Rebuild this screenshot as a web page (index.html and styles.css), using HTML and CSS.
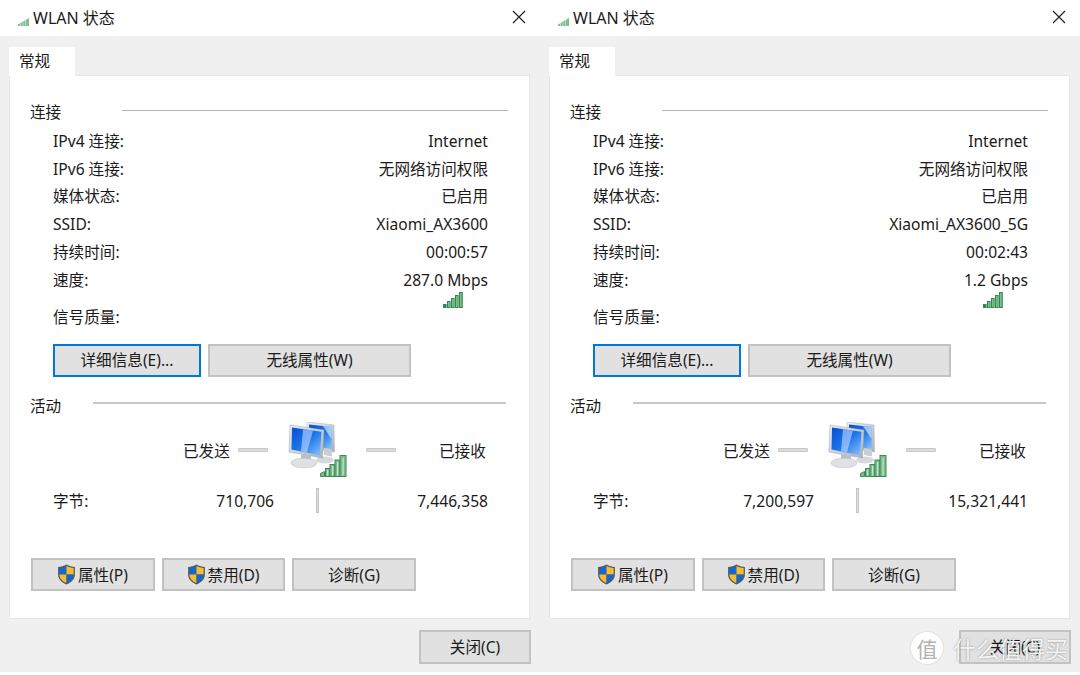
FILE: index.html
```html
<!DOCTYPE html>
<html lang="zh-CN">
<head>
<meta charset="utf-8">
<title>WLAN 状态</title>
<link rel="stylesheet" href="styles.css">
</head>
<body>
<svg class="defs" width="0" height="0" aria-hidden="true">
  <defs>
    <linearGradient id="scr" x1="0" y1="0" x2="1" y2="1"><stop offset="0" stop-color="#0a4fd0"/><stop offset=".5" stop-color="#1c74ec"/><stop offset="1" stop-color="#8cc4f8"/></linearGradient>
    <linearGradient id="frm" x1="0" y1="0" x2="1" y2="1"><stop offset="0" stop-color="#eef2f6"/><stop offset="1" stop-color="#aab2ba"/></linearGradient>
    <symbol id="bars" viewBox="0 0 27 22">
      <g fill="#7dbb8e" stroke="#3f8a58" stroke-width="1">
        <path d="M.5 21.500v-3l4-2v5z"/><rect x="5.500" y="13.500" width="4.500" height="8"/><rect x="10" y="9.500" width="5" height="12"/><rect x="15" y="5" width="5" height="16.500"/><rect x="20" y=".5" width="6" height="21"/>
      </g>
      <g fill="#c4e5cc"><rect x="7" y="15" width="1.200" height="5.500"/><rect x="12" y="11" width="1.200" height="9.500"/><rect x="17" y="7" width="1.200" height="13.500"/><rect x="22.500" y="3" width="1.200" height="17.500"/></g>
    </symbol>
    <symbol id="smallbars" viewBox="0 0 20 16">
      <g fill="#2f8a4c"><rect x="0" y="12" width="3.600" height="4"/><rect x="4" y="9" width="3.600" height="7"/><rect x="8" y="6" width="3.600" height="10"/><rect x="12" y="3" width="3.600" height="13"/><rect x="16" y="0" width="3.800" height="16"/></g>
      <g fill="#b9dfc4"><rect x="5.400" y="10" width="1" height="5"/><rect x="9.400" y="7" width="1" height="8"/><rect x="13.400" y="4" width="1" height="11"/><rect x="17.400" y="1" width="1" height="14"/></g>
    </symbol>
    <symbol id="tinybars" viewBox="0 0 11 8">
      <path d="M0 8V6.500L11 0v8z" fill="#7fbf8f"/>
      <path d="M2.500 8V5M5 8V3.500M7.500 8V2" stroke="#e4f3e8" stroke-width=".6"/>
    </symbol>
    <symbol id="shield" viewBox="0 0 20 20">
      <path d="M10 .5C7.500 2 4.500 2.800 2 2.800v7.200c0 4.500 3.500 7.800 8 9.500 4.500-1.700 8-5 8-9.500V2.800C15.500 2.800 12.500 2 10 .5z" fill="#555a5e"/>
      <path d="M10 2v8H3.200V3.800C5.800 3.700 8 3 10 2z" fill="#1668c8"/>
      <path d="M10 2c2 1 4.200 1.700 6.800 1.800V10H10z" fill="#f7bb36"/>
      <path d="M3.200 10H10v8.200C6.300 16.600 3.400 14 3.200 10z" fill="#f7bb36"/>
      <path d="M10 10h6.800c-.2 4-3.100 6.600-6.800 8.200z" fill="#1668c8"/>
    </symbol>
    <symbol id="net" viewBox="0 0 60 56">
      <path d="M20 0l27 3 .5 27L20 25z" fill="url(#frm)" stroke="#a6adb4" stroke-width=".5"/>
      <path d="M22 2.500l23 2.500-.5 22-22.500-3.500z" fill="url(#scr)"/>
      <path d="M36 4l9 1-.5 12z" fill="#d6eaff" opacity=".7"/>
      <path d="M37 26l8 1.500 0 7-8-1.500z" fill="#c9ced3"/>
      <ellipse cx="38" cy="38" rx="9" ry="3.500" fill="#d6d9dc"/>
      <path d="M3 3l34 5-1.500 28L2 30z" fill="url(#frm)" stroke="#9aa3ab" stroke-width=".5"/>
      <path d="M5 5.500l29.500 4.300-1.500 23.500L4.500 27.500z" fill="url(#scr)"/>
      <path d="M16 7.200l10 1.500-6 21.500-6-1z" fill="#cfe6ff" opacity=".55"/>
      <path d="M14 32l10 2 0 6-10-2z" fill="#b9bfc4"/>
      <ellipse cx="17" cy="41" rx="13" ry="4.800" fill="#dfe2e4" stroke="#b4b9bd" stroke-width=".5"/>
    </symbol>
  </defs>
</svg>
<main class="desktop">
  <section class="window">
    <header class="titlebar">
      <svg class="title-icon"><use href="#tinybars"/></svg>
      <span class="title-text">WLAN 状态</span>
      <svg class="close-x" viewBox="0 0 14 14"><path d="M1 1l12 12M13 1L1 13"/></svg>
    </header>
    <div class="client">
      <div class="tab">常规</div>
      <div class="panel">
        <div class="group-head conn"><span>连接</span><i class="rule"></i></div>
        <div class="rows">
          <div class="row"><span>IPv4 连接:</span><span>Internet</span></div>
          <div class="row"><span>IPv6 连接:</span><span>无网络访问权限</span></div>
          <div class="row"><span>媒体状态:</span><span>已启用</span></div>
          <div class="row"><span>SSID:</span><span>Xiaomi_AX3600</span></div>
          <div class="row"><span>持续时间:</span><span>00:00:57</span></div>
          <div class="row"><span>速度:</span><span>287.0 Mbps</span></div>
          <div class="row signal"><span>信号质量:</span><svg class="signal-icon"><use href="#smallbars"/></svg></div>
        </div>
        <div class="btns detail">
          <button class="btn focus w148">详细信息(E)...</button>
          <button class="btn w203">无线属性(W)</button>
        </div>
        <div class="group-head act"><span>活动</span><i class="rule"></i></div>
        <div class="traffic">
          <span class="sent">已发送</span><i class="dash"></i>
          <svg class="net-icon"><use href="#net"/></svg>
          <i class="dash"></i><span class="recv">已接收</span>
          <svg class="net-bars"><use href="#bars"/></svg>
        </div>
        <div class="bytes">
          <span>字节:</span><span class="num">710,706</span><i class="vbar"></i><span class="num">7,446,358</span>
        </div>
        <div class="btns bottom">
          <button class="btn w124"><svg class="shield"><use href="#shield"/></svg>属性(P)</button>
          <button class="btn w123"><svg class="shield"><use href="#shield"/></svg>禁用(D)</button>
          <button class="btn w124">诊断(G)</button>
        </div>
      </div>
      <div class="footer"><button class="btn close">关闭(C)</button></div>
    </div>
  </section>
  <section class="window">
    <header class="titlebar">
      <svg class="title-icon"><use href="#tinybars"/></svg>
      <span class="title-text">WLAN 状态</span>
      <svg class="close-x" viewBox="0 0 14 14"><path d="M1 1l12 12M13 1L1 13"/></svg>
    </header>
    <div class="client">
      <div class="tab">常规</div>
      <div class="panel">
        <div class="group-head conn"><span>连接</span><i class="rule"></i></div>
        <div class="rows">
          <div class="row"><span>IPv4 连接:</span><span>Internet</span></div>
          <div class="row"><span>IPv6 连接:</span><span>无网络访问权限</span></div>
          <div class="row"><span>媒体状态:</span><span>已启用</span></div>
          <div class="row"><span>SSID:</span><span>Xiaomi_AX3600_5G</span></div>
          <div class="row"><span>持续时间:</span><span>00:02:43</span></div>
          <div class="row"><span>速度:</span><span>1.2 Gbps</span></div>
          <div class="row signal"><span>信号质量:</span><svg class="signal-icon"><use href="#smallbars"/></svg></div>
        </div>
        <div class="btns detail">
          <button class="btn focus w148">详细信息(E)...</button>
          <button class="btn w203">无线属性(W)</button>
        </div>
        <div class="group-head act"><span>活动</span><i class="rule"></i></div>
        <div class="traffic">
          <span class="sent">已发送</span><i class="dash"></i>
          <svg class="net-icon"><use href="#net"/></svg>
          <i class="dash"></i><span class="recv">已接收</span>
          <svg class="net-bars"><use href="#bars"/></svg>
        </div>
        <div class="bytes">
          <span>字节:</span><span class="num">7,200,597</span><i class="vbar"></i><span class="num">15,321,441</span>
        </div>
        <div class="btns bottom">
          <button class="btn w124"><svg class="shield"><use href="#shield"/></svg>属性(P)</button>
          <button class="btn w123"><svg class="shield"><use href="#shield"/></svg>禁用(D)</button>
          <button class="btn w124">诊断(G)</button>
        </div>
      </div>
      <div class="footer"><button class="btn close">关闭(C)</button></div>
    </div>
  </section>
  <div class="watermark"><span class="wm-badge">值</span><span class="wm-text">什么值得买</span></div>
</main>
</body>
</html>
```

FILE: styles.css
```css
* { box-sizing: border-box; }
html, body { margin: 0; padding: 0; }
body {
  width: 1080px;
  height: 675px;
  overflow: hidden;
  background: #fff;
  color: #1a1a1a;
  font-family: "Noto Sans", "Noto Sans CJK SC", sans-serif;
  font-size: 15.600px;
  line-height: 22px;
}
.defs { position: absolute; }
.desktop { position: relative; display: flex; width: 1080px; height: 675px; }
.window { width: 540px; height: 675px; display: flex; flex-direction: column; }

.titlebar {
  height: 36px;
  flex: none;
  background: #fff;
  display: flex;
  align-items: center;
  padding: 0 14px 0 18px;
}
.title-icon { width: 11px; height: 8px; margin-top: 8px; flex: none; }
.title-text { margin-left: 4px; font-size: 16px; flex: 1; color: #1a1a1a; }
.close-x { width: 14px; height: 14px; fill: none; stroke: #222; stroke-width: 1.200; margin-top: -2px; }

.client {
  flex: 1;
  background: #f0f0f0;
  padding: 11px 0 0 9px;
  margin-bottom: 3px;
}
.tab {
  width: 66px;
  height: 29px;
  background: #fff;
  padding: 3px 0 0 10px;
  margin-bottom: -1px;
  position: relative;
}
.panel {
  width: 521px;
  height: 544px;
  background: #fff;
  border: 1px solid #e6e6e6;
  padding-top: 25px;
}
.group-head { display: flex; align-items: center; height: 22px; padding-left: 20px; }
.rule { display: block; height: 1px; background: #b4b4b4; }
.conn .rule { margin: -3px 0 0 61px; width: 386px; }
.act { margin-top: 18px; }
.act .rule { margin: -5px 0 0 32px; width: 413px; background: #c8c8c8; height: 2px; }

.rows { margin: 4px 41px 0 43px; }
.row { display: flex; justify-content: space-between; align-items: center; height: 27.800px; }
.row.signal { height: 34px; align-items: flex-end; }
.signal-icon { width: 20px; height: 16px; margin: 0 25px 20px 0; }

.btns { display: flex; gap: 7px; }
.detail { margin: 16px 0 0 43px; }
.bottom { margin: 43px 0 0 21px; }
.btn {
  height: 33px;
  background: #e1e1e1;
  border: 2px solid #c2c2c2;
  font: inherit;
  color: #1a1a1a;
  padding: 0;
  display: flex;
  align-items: center;
  justify-content: center;
}
.bottom .btn { padding-top: 2px; }
.focus { border-color: #0078d7; }
.w148 { width: 148px; }
.w203 { width: 203px; }
.w124 { width: 124px; }
.w123 { width: 123px; }
.shield { width: 21px; height: 21px; flex: none; margin: -2px 1px 0 -2px; }
.close { width: 112px; height: 34px; }

.footer { display: flex; justify-content: flex-end; padding-top: 11px; width: 531px; margin-left: -9px; }

.traffic {
  position: relative;
  display: grid;
  grid-template-columns: 46px 9px 30px 19px 59px 20px 30px 43px 46px;
  align-items: center;
  margin: 5px 0 0 173px;
  width: 306px;
  height: 57px;
}
.sent { grid-column: 1; margin-top: 2px; white-space: nowrap; }
.traffic .dash:nth-of-type(1) { grid-column: 3; }
.net-icon { grid-column: 5; width: 60px; height: 56px; }
.traffic .dash:nth-of-type(2) { grid-column: 7; }
.recv { grid-column: 9; margin-top: 2px; white-space: nowrap; }
.dash { display: block; height: 4px; background: #dcdcdc; border: 1px solid #c8c8c8; border-radius: 1px; }
.net-bars { position: absolute; left: 137px; top: 33px; width: 27px; height: 22px; }

.bytes {
  display: grid;
  grid-template-columns: 100px 121px 86px 128px;
  align-items: center;
  margin: 8px 0 0 43px;
  height: 28px;
}
.num { text-align: right; }
.vbar { display: block; justify-self: center; width: 3px; height: 25px; background: #dedede; border: 1px solid #c4c4c4; }

.watermark { position: absolute; left: 911px; top: 632px; display: flex; align-items: center; gap: 10px; height: 32px; }
.wm-badge {
  width: 32px; height: 32px; border-radius: 50%;
  background: rgba(255, 255, 255, .92);
  color: #b2b2b2;
  font-family: "Noto Sans CJK SC", sans-serif;
  font-size: 21px; line-height: 32px; text-align: center;
  box-shadow: 0 0 2px rgba(0, 0, 0, .2);
}
.wm-text {
  color: rgba(255, 255, 255, .9);
  font-family: "Noto Sans CJK SC", sans-serif;
  font-size: 23px; line-height: 32px;
  text-shadow: 0 0 2px rgba(0, 0, 0, .4);
  white-space: nowrap;
}
```
